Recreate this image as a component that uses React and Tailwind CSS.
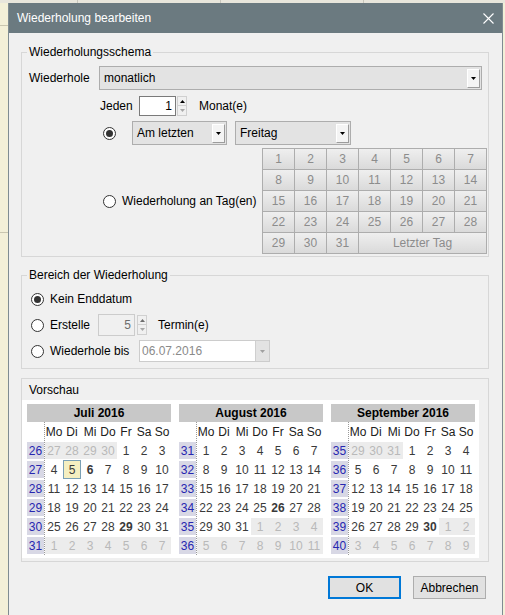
import React from "react";

function Tri({ color = "#000", up = false }) {
  return (
    <svg width="5" height="3" viewBox="0 0 5 3">
      <path d={up ? "M0 3H5L2.5 0Z" : "M0 0H5L2.5 3Z"} fill={color} />
    </svg>
  );
}

function DropBtn() {
  return (
    <div className="w-[13px] h-[19px] bg-[#f4f4f4] border border-t-white border-l-white border-r-[#9c9c9c] border-b-[#9c9c9c] flex items-center justify-center">
      <Tri />
    </div>
  );
}

function Radio({ checked }) {
  return (
    <span className="w-[13px] h-[13px] rounded-full border border-[#333333] bg-white flex items-center justify-center shrink-0">
      {checked && <span className="w-[7px] h-[7px] rounded-full bg-[#333333]" />}
    </span>
  );
}

function SpinArrows({ dim }) {
  return (
    <div className="w-[10px] h-[20px] flex flex-col">
      <div className="h-[10px] flex items-center justify-center bg-[#f0f0f0] border border-[#d0d0d0]">
        <Tri up color={dim ? "#6d6d6d" : "#000"} />
      </div>
      <div className="h-[10px] flex items-center justify-center bg-[#f0f0f0] border border-t-0 border-[#d0d0d0]">
        <Tri color="#a8a8a8" />
      </div>
    </div>
  );
}

function Group({ label, className, children }) {
  return (
    <div className={"relative border border-[#d7d7d7] " + className}>
      <span className="absolute left-[5px] -top-[8px] bg-[#f0f0f0] px-[2px] leading-[14px]">{label}</span>
      {children}
    </div>
  );
}

const months = [
  {
    name: "Juli 2016",
    weeks: [26, 27, 28, 29, 30, 31],
    rows: [
      [[27, "o"], [28, "o"], [29, "o"], [30, "o"], [1], [2], [3]],
      [[4], [5, "t"], [6, "b"], [7], [8], [9], [10]],
      [[11], [12], [13], [14], [15], [16], [17]],
      [[18], [19], [20], [21], [22], [23], [24]],
      [[25], [26], [27], [28], [29, "b"], [30], [31]],
      [[1, "o"], [2, "o"], [3, "o"], [4, "o"], [5, "o"], [6, "o"], [7, "o"]],
    ],
  },
  {
    name: "August 2016",
    weeks: [31, 32, 33, 34, 35, 36],
    rows: [
      [[1], [2], [3], [4], [5], [6], [7]],
      [[8], [9], [10], [11], [12], [13], [14]],
      [[15], [16], [17], [18], [19], [20], [21]],
      [[22], [23], [24], [25], [26, "b"], [27], [28]],
      [[29], [30], [31], [1, "o"], [2, "o"], [3, "o"], [4, "o"]],
      [[5, "o"], [6, "o"], [7, "o"], [8, "o"], [9, "o"], [10, "o"], [11, "o"]],
    ],
  },
  {
    name: "September 2016",
    weeks: [35, 36, 37, 38, 39, 40],
    rows: [
      [[29, "o"], [30, "o"], [31, "o"], [1], [2], [3], [4]],
      [[5], [6], [7], [8], [9], [10], [11]],
      [[12], [13], [14], [15], [16], [17], [18]],
      [[19], [20], [21], [22], [23], [24], [25]],
      [[26], [27], [28], [29], [30, "b"], [1, "o"], [2, "o"]],
      [[3, "o"], [4, "o"], [5, "o"], [6, "o"], [7, "o"], [8, "o"], [9, "o"]],
    ],
  },
];

const dayNames = ["Mo", "Di", "Mi", "Do", "Fr", "Sa", "So"];

function DayCell({ d, t }) {
  if (t === "t") {
    return (
      <div className="w-[18px] h-[19px] flex items-center justify-center bg-[#f5efc0] border border-[#7aa0b5] text-[#3a3a3a]">
        {d}
      </div>
    );
  }
  if (t === "o") {
    return (
      <div className="w-[18px] h-[19px] py-[1px]">
        <div className="h-[17px] bg-[#ececec] text-[#b9b9b9] flex items-center justify-center">{d}</div>
      </div>
    );
  }
  return (
    <div
      className={
        "w-[18px] h-[19px] flex items-center justify-center text-[#3a3a3a] " + (t === "b" ? "font-bold" : "")
      }
    >
      {d}
    </div>
  );
}

function Month({ m }) {
  return (
    <div className="w-[144px] flex flex-col">
      <div className="h-[18px] bg-[#c8c8c8] flex items-center justify-center font-bold whitespace-nowrap">
        {m.name}
      </div>
      <div className="flex">
        <div className="w-[17px] flex flex-col">
          <div className="h-[19px]" />
          {m.weeks.map((w) => (
            <div key={w} className="h-[19px] py-[1px]">
              <div className="h-[17px] bg-[#d8d8e5] text-[#2626b0] flex items-center justify-center">{w}</div>
            </div>
          ))}
        </div>
        <div className="w-[127px] border-l border-dotted border-[#9a9a9a] flex flex-col">
          <div className="h-[19px] flex">
            {dayNames.map((n) => (
              <div key={n} className="w-[18px] flex items-center justify-center text-[#202020]">
                {n}
              </div>
            ))}
          </div>
          {m.rows.map((r, i) => (
            <div key={i} className="flex h-[19px]">
              {r.map(([d, t], j) => (
                <DayCell key={j} d={d} t={t} />
              ))}
            </div>
          ))}
        </div>
      </div>
    </div>
  );
}

export default function App() {
  const grid = [];
  for (let i = 1; i <= 31; i++) grid.push(String(i));
  return (
    <div className="w-[505px] h-[615px] overflow-hidden bg-[#f3f0d8] flex flex-col font-['Liberation_Sans',Arial,sans-serif] text-[12px] text-black">
      <div className="h-[3px] shrink-0 bg-[#e8e6dc] flex">
        <div className="w-[77px]" />
        <div className="w-px bg-[#c8c6bc]" />
        <div className="w-[142px]" />
        <div className="w-px bg-[#c8c6bc]" />
        <div className="w-[142px]" />
        <div className="w-px bg-[#c8c6bc]" />
      </div>
      <div className="flex flex-1 min-h-0">
        <div className="w-[8px] shrink-0 flex flex-col">
          <div className="h-[22px]" />
          <div className="h-px bg-[#c9c6b0]" />
          <div className="h-[206px]" />
          <div className="h-px bg-[#c9c6b0]" />
        </div>
        <div className="w-[495px] shrink-0 flex flex-col border-x border-[#7f8c92] bg-[#f0f0f0]">
          <div className="h-[30px] shrink-0 bg-[#6b7a80] flex items-center justify-between pl-[8px] pr-[8px] text-white">
            <span>Wiederholung bearbeiten</span>
            <svg width="11" height="11" viewBox="0 0 11 11">
              <path d="M0.5 0.5L10.5 10.5M10.5 0.5L0.5 10.5" stroke="#ffffff" strokeWidth="1.1" />
            </svg>
          </div>
          <div className="flex-1 pl-[12px] pr-[13px] flex flex-col">
            {/* Group 1 */}
            <Group label="Wiederholungsschema" className="mt-[19px] h-[205px] pt-[13px]">
              <div className="flex items-center h-[24px]">
                <div className="w-[77px] pl-[7px]">Wiederhole</div>
                <div className="w-[383px] h-[24px] border border-[#adadad] bg-[#e3e3e3] flex items-center justify-between pl-[4px] pr-[1px]">
                  <span>monatlich</span>
                  <DropBtn />
                </div>
              </div>
              <div className="flex items-center h-[20px] mt-[6px]">
                <div className="w-[78px]" />
                <div className="w-[39px]">Jeden</div>
                <div className="w-[37px] h-[20px] bg-white border border-[#7a7a7a] flex items-center justify-end pr-[3px]">1</div>
                <div className="ml-[1px]">
                  <SpinArrows />
                </div>
                <div className="ml-[12px]">Monat(e)</div>
              </div>
              <div className="flex items-center h-[24px] mt-[5px]">
                <div className="w-[81px]" />
                <Radio checked />
                <div className="ml-[16px] w-[95px] h-[24px] border border-[#adadad] bg-[#e3e3e3] flex items-center justify-between pl-[4px] pr-[1px]">
                  <span>Am letzten</span>
                  <DropBtn />
                </div>
                <div className="ml-[8px] w-[116px] h-[24px] border border-[#adadad] bg-[#e3e3e3] flex items-center justify-between pl-[4px] pr-[1px]">
                  <span>Freitag</span>
                  <DropBtn />
                </div>
              </div>
              <div className="flex items-center mt-[3px]">
                <div className="w-[240px] pl-[81px] flex items-center gap-[6px]">
                  <Radio />
                  <span className="whitespace-nowrap">Wiederholung an Tag(en)</span>
                </div>
                <div className="grid grid-cols-[repeat(7,32px)] grid-rows-[repeat(5,21px)] border-l border-t border-[#adadad] text-[#8c8c8c]">
                  {grid.map((g) => (
                    <div
                      key={g}
                      className="border-r border-b border-[#adadad] bg-linear-to-b from-[#efefef] to-[#dadada] flex items-center justify-center"
                    >
                      {g}
                    </div>
                  ))}
                  <div className="col-span-4 border-r border-b border-[#adadad] bg-linear-to-b from-[#efefef] to-[#dadada] flex items-center justify-center">
                    Letzter Tag
                  </div>
                </div>
              </div>
            </Group>

            {/* Group 2 */}
            <Group label="Bereich der Wiederholung" className="mt-[18px] h-[94px] pt-[12px]">
              <div className="flex items-center h-[22px] pl-[9px] gap-[6px]">
                <Radio checked />
                <span>Kein Enddatum</span>
              </div>
              <div className="flex items-center h-[22px] mt-[4px] pl-[9px]">
                <Radio />
                <span className="ml-[6px] w-[48px]">Erstelle</span>
                <div className="w-[37px] h-[22px] bg-[#f0f0f0] border border-[#cccccc] flex items-center justify-end pr-[3px] text-[#6d6d6d]">5</div>
                <div className="ml-[2px]">
                  <SpinArrows dim />
                </div>
                <span className="ml-[11px]">Termin(e)</span>
              </div>
              <div className="flex items-center h-[22px] mt-[4px] pl-[9px]">
                <Radio />
                <span className="ml-[6px] w-[89px]">Wiederhole bis</span>
                <div className="w-[131px] h-[22px] bg-white border border-[#cccccc] flex items-center justify-between pl-[2px]">
                  <span className="text-[#8a8a8a]">06.07.2016</span>
                  <div className="w-[14px] h-[20px] bg-[#e3e3e3] border-l border-[#cfcfcf] flex items-center justify-center">
                    <Tri color="#a0a0a0" />
                  </div>
                </div>
              </div>
            </Group>

            {/* Group 3 */}
            <div className="mt-[9px] h-[184px] border border-[#d7d7d7] flex flex-col">
              <div className="h-[21px] pl-[7px] flex items-center">Vorschau</div>
              <div className="w-[457px] h-[158px] bg-white pt-[4px] pl-[5px] flex gap-[8px]">
                {months.map((m) => (
                  <Month key={m.name} m={m} />
                ))}
              </div>
            </div>

            {/* Buttons */}
            <div className="mt-[14px] flex justify-end gap-[12px] pr-[3px]">
              <button className="w-[73px] h-[23px] border-2 border-[#0078d7] bg-[#e1e1e1]">OK</button>
              <button className="w-[73px] h-[23px] border border-[#adadad] bg-[#e1e1e1]">Abbrechen</button>
            </div>
          </div>
        </div>
      </div>
    </div>
  );
}
